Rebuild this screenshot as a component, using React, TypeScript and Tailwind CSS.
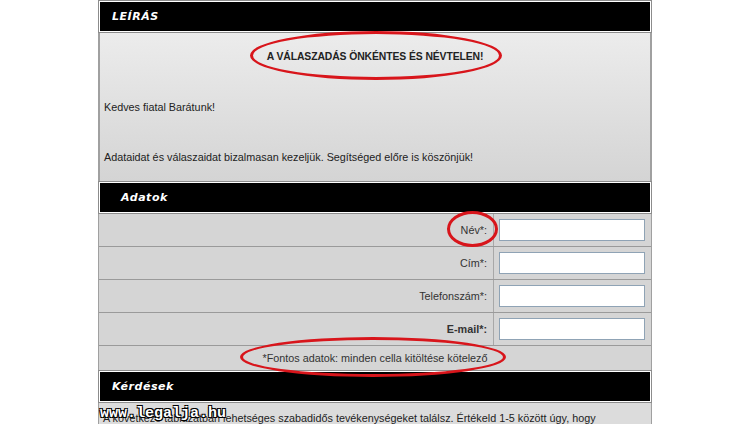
import React from "react";

const headerFont = { fontFamily: '"DejaVu Sans", "Liberation Sans", sans-serif' };

function SectionHeader({ title, indent }: { title: string; indent: string }) {
    return (
        <div className="border border-[#8c8c8c] bg-white p-px">
            <div className={`h-[29px] bg-black flex items-center ${indent}`}>
                <span style={headerFont} className="text-white text-[10px] font-bold italic tracking-[0.5px] scale-x-110 origin-left">
                    {title}
                </span>
            </div>
        </div>
    );
}

const rows = [
    { label: "Név*:", bold: false },
    { label: "Cím*:", bold: false },
    { label: "Telefonszám*:", bold: false },
    { label: "E-mail*:", bold: true },
];

export default function App() {
    return (
        <div className="relative w-[750px] h-[424px] overflow-hidden bg-white" style={{ fontFamily: '"Liberation Sans", Arial, sans-serif' }}>
            <div className="ml-[98px] w-[554px] text-[10.8px] text-[#222]">
                <SectionHeader title="LEÍRÁS" indent="pl-3" />

                <div className="h-[148px] border-x-2 border-[#a0a0a0] bg-gradient-to-b from-[#ececec] to-[#d4d4d4] flex flex-col">
                    <div className="h-[46px] flex items-center justify-center pt-[2px] font-bold text-[10.4px] text-[#222] tracking-[-0.1px]">
                        A VÁLASZADÁS ÖNKÉNTES ÉS NÉVTELEN!
                    </div>
                    <div className="pl-[4px] mt-[20px]">Kedves fiatal Barátunk!</div>
                    <div className="pl-[4px] mt-[34px]">Adataidat és válaszaidat bizalmasan kezeljük. Segítséged előre is köszönjük!</div>
                </div>

                <SectionHeader title="Adatok" indent="pl-[21px]" />

                <div className="border-x border-[#a0a0a0] bg-[#d5d5d5]">
                    {rows.map((r, i) => (
                        <div key={i} className="flex h-[33px] border-b border-[#9a9a9a]">
                            <div className={`w-[395px] flex items-center justify-end pr-[6px] border-r border-[#a8a8a8] text-[#333] ${r.bold ? "font-bold" : ""}`}>
                                {r.label}
                            </div>
                            <div className="flex-1 flex items-center pl-[5px]">
                                <div className="w-[146px] h-[22px] bg-white border border-[#8fa3b5]" />
                            </div>
                        </div>
                    ))}
                    <div className="h-[24px] flex items-center justify-center text-[#333]">
                        *Fontos adatok: minden cella kitöltése kötelező
                    </div>
                </div>

                <SectionHeader title="Kérdések" indent="pl-3" />

                <div className="h-[30px] border-x border-[#a0a0a0] bg-[#dcdcdc] pl-[4px] pt-[7px]">
                    A következő táblázatban lehetséges szabadidős tevékenységeket találsz. Értékeld 1-5 között úgy, hogy
                </div>
            </div>

            {/* red marker ellipses */}
            <div className="absolute left-[250px] top-[31px] w-[252px] h-[49px] rounded-[50%] border-[3px] border-[#d8151b]" />
            <div className="absolute left-[447px] top-[211px] w-[51px] h-[36px] rounded-[50%] border-[3px] border-[#d8151b]" />
            <div className="absolute left-[240px] top-[337px] w-[266px] h-[40px] rounded-[50%] border-[3px] border-[#d8151b]" />

            {/* watermark */}
            <div
                className="absolute left-[100px] top-[403px] text-white text-[15px] font-bold"
                style={{ fontFamily: '"Liberation Mono", monospace', textShadow: "1px 1px 0 #000, -1px -1px 0 #000, 1px -1px 0 #000, -1px 1px 0 #000" }}
            >
                www.legalja.hu
            </div>
        </div>
    );
}
